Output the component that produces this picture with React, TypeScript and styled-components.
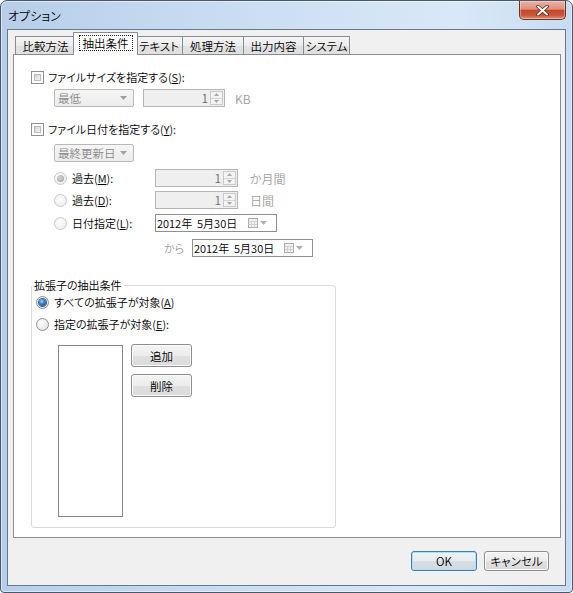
import React from "react";
import styled, { createGlobalStyle, css } from "styled-components";

const GlobalStyle = createGlobalStyle`
  html, body { margin: 0; padding: 0; background: #ffffff; }
  body {
    font-family: "Noto Sans CJK JP", "Noto Sans", sans-serif;
    font-size: 11px;
    font-weight: 350;
    font-feature-settings: "palt";
    color: #000;
  }
  #root { width: 573px; height: 593px; }
`;

const Window = styled.div`
  box-sizing: border-box;
  width: 573px;
  height: 593px;
  border: 1px solid #49586a;
  border-radius: 7px 7px 4px 4px;
  background: linear-gradient(90deg, #b6cee9 0%, #c5daf0 30%, #d3e4f5 65%, #d9e8f7 80%, #c7dcf2 100%);
  box-shadow: inset 0 0 0 1px rgba(255, 255, 255, 0.5);
  display: flex;
  flex-direction: column;
  padding: 0 6px 6px;
  overflow: hidden;
`;

const TitleBar = styled.div`
  height: 28px;
  display: flex;
  align-items: flex-start;
  padding-left: 1px;
`;

const TitleText = styled.span`
  margin-top: 6px;
  line-height: 17px;
  font-size: 12px;
`;

const CloseButton = styled.div`
  box-sizing: border-box;
  margin-left: auto;
  width: 47px;
  height: 19px;
  border: 1px solid #6e2f24;
  border-top: none;
  border-radius: 0 0 5px 5px;
  background: linear-gradient(#eab0a2 0%, #df907d 45%, #c4472c 52%, #c9553a 78%, #e39472 100%);
  box-shadow: inset 0 0 0 1px rgba(255, 255, 255, 0.35);
  display: flex;
  align-items: center;
  justify-content: center;
`;

const Client = styled.div`
  flex: 1;
  border: 1px solid #66788c;
  background: #f0f0f0;
  display: flex;
  flex-direction: column;
  padding: 2px 4px 0 5px;
`;

const TabStrip = styled.div`
  display: flex;
  align-items: flex-start;
  height: 23px;
  padding-left: 2px;
  margin-bottom: -1px;
  position: relative;
  z-index: 1;
  font-size: 11.5px;
`;

const Tab = styled.div<{ $w: number; $active?: boolean; $first?: boolean }>`
  box-sizing: border-box;
  width: ${(p) => p.$w}px;
  border: 1px solid #898c95;
  border-bottom: none;
  display: flex;
  justify-content: center;
  align-items: center;
  white-space: nowrap;
  ${(p) =>
    p.$active
      ? css`
          height: 23px;
          margin-left: -3px;
          margin-right: -2px;
          background: #ffffff;
          position: relative;
          z-index: 2;
          padding-bottom: 2px;
        `
      : css`
          height: 18px;
          margin-top: 4px;
          margin-left: ${p.$first ? 0 : -1}px;
          background: linear-gradient(#f6f6f6 0%, #ececec 50%, #e2e2e2 52%, #e0e0e0 100%);
        `}
`;

const FocusLabel = styled.span`
  border: 1px dotted #222;
  padding: 0 3px;
  line-height: 14px;
`;

const Panel = styled.div`
  box-sizing: border-box;
  height: 484px;
  border: 1px solid #898c95;
  background: #ffffff;
  display: flex;
  flex-direction: column;
  padding-left: 17px;
`;

const Row = styled.div<{ $top: number; $indent?: number; $h?: number }>`
  display: flex;
  align-items: center;
  height: ${(p) => p.$h ?? 18}px;
  margin-top: ${(p) => p.$top}px;
  padding-left: ${(p) => p.$indent ?? 0}px;
  white-space: pre;
`;

const CheckBox = styled.span`
  box-sizing: border-box;
  width: 13px;
  height: 13px;
  border: 1px solid #8e8f8f;
  background: #fff;
  padding: 2px;
  flex: none;
  &::after {
    content: "";
    display: block;
    box-sizing: border-box;
    width: 7px;
    height: 7px;
    border: 1px solid #b9bdc2;
    background: linear-gradient(135deg, #cfd2d6 0%, #e6e7e9 60%, #f6f6f6 100%);
  }
`;

const Radio = styled.span<{ $checked?: boolean; $disabled?: boolean }>`
  box-sizing: border-box;
  width: 13px;
  height: 13px;
  border-radius: 50%;
  flex: none;
  display: flex;
  align-items: center;
  justify-content: center;
  border: 1px solid ${(p) => (p.$disabled ? "#cacaca" : "#8e8f8f")};
  background: ${(p) =>
    p.$disabled
      ? "radial-gradient(circle at 40% 35%, #fdfdfd, #e9e9e9)"
      : "radial-gradient(circle at 40% 35%, #ffffff, #dadcdf)"};
  &::after {
    content: "";
    display: ${(p) => (p.$checked ? "block" : "none")};
    width: 7px;
    height: 7px;
    border-radius: 50%;
    background: ${(p) =>
      p.$disabled
        ? "radial-gradient(circle at 40% 35%, #d6d6d6, #9c9c9c)"
        : "radial-gradient(circle at 40% 35%, #9fdcff 0%, #2a78c8 45%, #163f78 100%)"};
    box-shadow: ${(p) => (p.$disabled ? "none" : "0 0 0 1px #3a5f86")};
  }
`;

const Label = styled.span<{ $gap?: number; $muted?: boolean }>`
  margin-left: ${(p) => p.$gap ?? 4}px;
  color: ${(p) => (p.$muted ? "#9d9d9d" : "#000")};
  line-height: 17px;
`;

const Combo = styled.div<{ $w: number }>`
  box-sizing: border-box;
  width: ${(p) => p.$w}px;
  height: 18px;
  border: 1px solid #b8b8b8;
  border-radius: 2px;
  background: linear-gradient(#f5f5f5, #ececec);
  color: #8a8a8a;
  display: flex;
  align-items: center;
  padding: 0 6px 0 3px;
  justify-content: space-between;
  font-size: 11.5px;
`;

const SpinBox = styled.div<{ $w: number; $ml?: number }>`
  box-sizing: border-box;
  width: ${(p) => p.$w}px;
  height: 18px;
  margin-left: ${(p) => p.$ml ?? 0}px;
  border: 1px solid #b5b5b5;
  background: #efefef;
  display: flex;
  align-items: stretch;
  justify-content: flex-end;
  padding: 1px;
  color: #6d6d6d;
  font-size: 12px;
`;

const SpinValue = styled.span`
  line-height: 14px;
  padding-right: 2px;
`;

const SpinButtons = styled.div`
  box-sizing: border-box;
  width: 13px;
  border: 1px solid #c9c9c9;
  background: #f3f3f3;
  display: flex;
  flex-direction: column;
`;

const SpinHalf = styled.div`
  flex: 1;
  display: flex;
  align-items: center;
  justify-content: center;
  & + & {
    border-top: 1px solid #d4d4d4;
  }
`;

const Unit = styled.span<{ $ml: number }>`
  margin-left: ${(p) => p.$ml}px;
  color: #9d9d9d;
  line-height: 17px;
  font-size: 12px;
`;

const RadioCell = styled.div`
  width: 101px;
  display: flex;
  align-items: center;
`;

const DatePicker = styled.div<{ $w: number }>`
  box-sizing: border-box;
  width: ${(p) => p.$w}px;
  height: 18px;
  border: 1px solid #8f8f8f;
  background: #fff;
  display: flex;
  align-items: center;
  padding: 0 9px 0 1px;
  white-space: pre;
  line-height: 16px;
`;

const DateText = styled.span`
  flex: 1;
`;

const FromLabel = styled.span`
  width: 28px;
  color: #9d9d9d;
  line-height: 17px;
`;

const GroupBox = styled.fieldset`
  box-sizing: border-box;
  width: 305px;
  margin: 20px 0 0 0;
  padding: 0 0 10px 0;
  border: 1px solid #d5dadf;
  border-radius: 3px;
  min-inline-size: 0;
  display: flex;
  flex-direction: column;
`;

const Legend = styled.legend`
  padding: 0 2px;
  margin-left: 0;
  line-height: 16px;
`;

const ListArea = styled.div`
  display: flex;
  align-items: flex-start;
  margin-top: 12px;
  padding-left: 26px;
`;

const ListBox = styled.div`
  box-sizing: border-box;
  width: 65px;
  height: 172px;
  border: 1px solid #828790;
  background: #fff;
`;

const ButtonColumn = styled.div`
  display: flex;
  flex-direction: column;
  gap: 7px;
  margin-left: 8px;
  margin-top: -1px;
`;

const PushButton = styled.button<{ $w: number; $h?: number; $default?: boolean }>`
  box-sizing: border-box;
  width: ${(p) => p.$w}px;
  height: ${(p) => p.$h ?? 23}px;
  padding: 0;
  font: inherit;
  font-size: 11.5px;
  color: #000;
  border-radius: 3px;
  border: 1px solid ${(p) => (p.$default ? "#3c7fb1" : "#8d8d8d")};
  box-shadow: inset 0 0 0 1px ${(p) => (p.$default ? "#aee0fa" : "#fbfbfb")};
  background: ${(p) =>
    p.$default
      ? "linear-gradient(#f0f4f7 0%, #e6ebef 50%, #d8dfe4 52%, #d2d9de 100%)"
      : "linear-gradient(#f4f4f4 0%, #ececec 50%, #e0e0e0 52%, #dbdbdb 100%)"};
  display: flex;
  align-items: center;
  justify-content: center;
  line-height: 16px;
`;

const Footer = styled.div`
  display: flex;
  justify-content: flex-end;
  gap: 7px;
  padding: 13px 12px 0 0;
`;

const DropArrow = ({ color = "#9f9f9f" }: { color?: string }) => (
  <svg width="7" height="4" viewBox="0 0 7 4">
    <path d="M0 0h7L3.5 4z" fill={color} />
  </svg>
);

const SpinArrow = ({ up }: { up?: boolean }) => (
  <svg width="5" height="3" viewBox="0 0 5 3">
    <path d={up ? "M0 3h5L2.5 0z" : "M0 0h5L2.5 3z"} fill="#a8a8a8" />
  </svg>
);

const CalendarIcon = () => (
  <svg width="10" height="10" viewBox="0 0 10 10">
    <rect x="0.5" y="0.5" width="9" height="9" fill="#f3f3f3" stroke="#a9a9a9" />
    <path d="M0.5 3.5h9M0.5 6.5h9M3.5 3v6.5M6.5 3v6.5" stroke="#cfcfcf" />
  </svg>
);

const CloseGlyph = () => (
  <svg width="13" height="11" viewBox="0 0 13 11">
    <path d="M2 1.5l9 8M11 1.5l-9 8" stroke="#5a1e16" strokeWidth="3.4" strokeLinecap="round" />
    <path d="M2 1.5l9 8M11 1.5l-9 8" stroke="#ffffff" strokeWidth="2" strokeLinecap="round" />
  </svg>
);

const Spin = ({ w, ml, value }: { w: number; ml?: number; value: string }) => (
  <SpinBox $w={w} $ml={ml}>
    <SpinValue>{value}</SpinValue>
    <SpinButtons>
      <SpinHalf>
        <SpinArrow up />
      </SpinHalf>
      <SpinHalf>
        <SpinArrow />
      </SpinHalf>
    </SpinButtons>
  </SpinBox>
);

const DateBox = ({ w, text }: { w: number; text: string }) => (
  <DatePicker $w={w}>
    <DateText>{text}</DateText>
    <CalendarIcon />
    <span style={{ width: 2 }} />
    <DropArrow color="#b0b0b0" />
  </DatePicker>
);

const tabs = [
  { label: "比較方法", w: 61 },
  { label: "抽出条件", w: 65, active: true },
  { label: "テキスト", w: 48 },
  { label: "処理方法", w: 62 },
  { label: "出力内容", w: 61 },
  { label: "システム", w: 47 },
];

export default function App() {
  return (
    <>
      <GlobalStyle />
      <Window>
        <TitleBar>
          <TitleText>オプション</TitleText>
          <CloseButton>
            <CloseGlyph />
          </CloseButton>
        </TitleBar>
        <Client>
          <TabStrip>
            {tabs.map((t, i) => (
              <Tab key={t.label} $w={t.w} $active={t.active} $first={i === 0}>
                {t.active ? <FocusLabel>{t.label}</FocusLabel> : t.label}
              </Tab>
            ))}
          </TabStrip>
          <Panel>
            <Row $top={14} $h={17}>
              <CheckBox />
              <Label>
                ファイルサイズを指定する(<u>S</u>):
              </Label>
            </Row>
            <Row $top={3} $indent={23}>
              <Combo $w={80}>
                <span>最低</span>
                <DropArrow />
              </Combo>
              <Spin w={82} ml={9} value="1" />
              <Unit $ml={10}>KB</Unit>
            </Row>
            <Row $top={14} $h={17}>
              <CheckBox />
              <Label>
                ファイル日付を指定する(<u>Y</u>):
              </Label>
            </Row>
            <Row $top={6} $indent={23}>
              <Combo $w={80}>
                <span>最終更新日</span>
                <DropArrow />
              </Combo>
            </Row>
            <Row $top={7} $indent={23}>
              <RadioCell>
                <Radio $checked $disabled />
                <Label $gap={5}>
                  過去(<u>M</u>):
                </Label>
              </RadioCell>
              <Spin w={83} value="1" />
              <Unit $ml={12}>か月間</Unit>
            </Row>
            <Row $top={4} $indent={23}>
              <RadioCell>
                <Radio $disabled />
                <Label $gap={5}>
                  過去(<u>D</u>):
                </Label>
              </RadioCell>
              <Spin w={83} value="1" />
              <Unit $ml={12}>日間</Unit>
            </Row>
            <Row $top={5} $indent={23}>
              <RadioCell>
                <Radio $disabled />
                <Label $gap={5}>
                  日付指定(<u>L</u>):
                </Label>
              </RadioCell>
              <DateBox w={122} text="2012年  5月30日" />
            </Row>
            <Row $top={7} $indent={133}>
              <FromLabel>から</FromLabel>
              <DateBox w={121} text="2012年  5月30日" />
            </Row>
            <GroupBox>
              <Legend>拡張子の抽出条件</Legend>
              <Row $top={1} $h={17} $indent={4}>
                <Radio $checked />
                <Label $gap={5}>
                  すべての拡張子が対象(<u>A</u>)
                </Label>
              </Row>
              <Row $top={5} $h={17} $indent={4}>
                <Radio />
                <Label $gap={5}>
                  指定の拡張子が対象(<u>E</u>):
                </Label>
              </Row>
              <ListArea>
                <ListBox />
                <ButtonColumn>
                  <PushButton $w={61}>追加</PushButton>
                  <PushButton $w={61}>削除</PushButton>
                </ButtonColumn>
              </ListArea>
            </GroupBox>
          </Panel>
          <Footer>
            <PushButton $w={66} $h={20} $default>
              OK
            </PushButton>
            <PushButton $w={65} $h={20}>
              キャンセル
            </PushButton>
          </Footer>
        </Client>
      </Window>
    </>
  );
}
